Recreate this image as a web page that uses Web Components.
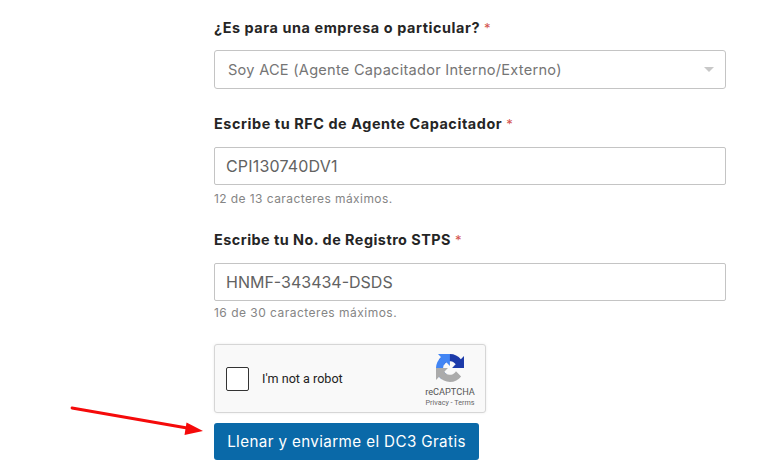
<!DOCTYPE html>
<html lang="es"><head><meta charset="utf-8"><title>Formulario</title>
<style>
html,body{margin:0;padding:0;background:#fff;height:470px;overflow:hidden}
body{font-family:Inter,"Open Sans",sans-serif}
</style></head><body>
<dc3-form>
  <form-field label="¿Es para una empresa o particular?" style="--after:25px;--gap:12px">
    <select-box>Soy ACE (Agente Capacitador Interno/Externo)</select-box>
  </form-field>
  <form-field label="Escribe tu RFC de Agente Capacitador" hint="12 de 13 caracteres máximos." style="--after:23px;--gap:13px;--hg:6px;--bl:.18px">
    <text-box>CPI130740DV1</text-box>
  </form-field>
  <form-field label="Escribe tu No. de Registro STPS" hint="16 de 30 caracteres máximos." style="--after:23px;--gap:13px;--hg:4px;--ls:.48px;--bl:0px;--hl:.48px">
    <text-box>HNMF-343434-DSDS</text-box>
  </form-field>
  <recaptcha-box></recaptcha-box>
  <submit-button>Llenar y enviarme el DC3 Gratis</submit-button>
</dc3-form>
<script>
function def(name,html){customElements.define(name,class extends HTMLElement{
  connectedCallback(){ if(this.shadowRoot)return; const r=this.attachShadow({mode:'open'}); r.innerHTML=typeof html==='function'?html(this):html; }
});}
def('dc3-form',`<style>
:host{display:flex;flex-direction:column;width:512px;margin-left:214px;padding-top:18px;position:relative;height:452px;box-sizing:content-box}
svg{position:absolute;left:-214px;top:0;pointer-events:none}
</style><slot></slot>
<svg width="214" height="470" viewBox="0 0 214 470" aria-hidden="true">
<line x1="72" y1="408" x2="190" y2="428.500" stroke="#f50a0a" stroke-width="2.800" stroke-linecap="round"/>
<polygon points="186.500,422.500 203,431 184.500,435" fill="#f50a0a"/>
</svg>`);
def('form-field',h=>`<style>
:host{display:flex;flex-direction:column;margin-bottom:var(--after,30px)}
.l{font:700 14.400px/20px Inter,sans-serif;color:#252525;margin-bottom:var(--gap,12px);letter-spacing:var(--ls,.58px);white-space:nowrap}
.l i{font-style:normal;font-weight:400;font-size:13px;color:#d4524e;letter-spacing:0}
.h{font:400 12px/16px Inter,sans-serif;color:#858585;margin-top:var(--hg,5px);letter-spacing:var(--hl,.42px)}
</style><div class="l">${h.getAttribute('label')} <i>*</i></div><slot></slot>${h.getAttribute('hint')?`<div class="h">${h.getAttribute('hint')}</div>`:''}`);
def('select-box',`<style>
:host{display:flex;align-items:center;justify-content:space-between;height:39px;box-sizing:border-box;border:1px solid #c4c4c4;border-radius:3px;padding:0 11px 0 13px;font:400 14.600px Inter,sans-serif;color:#757575;background:#fff;letter-spacing:.25px}
b{width:0;height:0;border-left:5px solid transparent;border-right:5px solid transparent;border-top:5px solid #c8c8c8}
</style><span><slot></slot></span><b></b>`);
def('text-box',`<style>
:host{display:flex;align-items:center;height:38px;box-sizing:border-box;border:1px solid #c4c4c4;border-radius:2px;padding:0 11px;font:400 16px Inter,sans-serif;color:#626262;background:#fff;letter-spacing:var(--bl,.1px)}
</style><slot></slot>`);
def('recaptcha-box',`<style>
:host{display:flex;align-items:center;width:272px;height:69px;box-sizing:border-box;border:1px solid #d6d6d6;border-radius:3px;background:#f9f9f9;box-shadow:0 0 3px rgba(0,0,0,.08);margin-bottom:10px;padding-left:11px;font-family:Roboto,sans-serif}
.c{width:23px;height:24px;box-sizing:border-box;border:1px solid #333;border-radius:2px;background:#fff;flex:none}
.t{font-size:12.600px;color:#222;margin-left:13px;flex:1}
.r{display:flex;flex-direction:column;align-items:center;width:56px;margin-right:7px;margin-top:4px}
.r svg{display:block}
.n{font-size:9.200px;line-height:11px;color:#555;margin-top:4px}
.p{font-size:7.200px;line-height:10px;color:#666;white-space:nowrap;margin-top:1px}
</style><div class="c"></div><div class="t">I'm not a robot</div>
<div class="r"><svg width="28" height="28" viewBox="0 0 64 64" aria-hidden="true">
<path d="M64 31.955l-.033-1.37V4.687l-7.16 7.16C50.948 4.674 42.033.093 32.05.093c-10.4 0-19.622 4.96-25.458 12.64l11.736 11.86a15.55 15.55 0 0 1 4.754-5.334c2.05-1.6 4.952-2.906 8.968-2.906.485 0 .86.057 1.135.163 4.976.393 9.288 3.14 11.828 7.124l-8.307 8.307c10.522-.04 22.4-.066 27.295.006" fill="#1c3aa9"/>
<path d="M31.862.094l-1.37.033H4.594l7.16 7.16C4.58 13.147 0 22.06 0 32.045c0 10.4 4.96 19.622 12.64 25.458l11.86-11.736a15.55 15.55 0 0 1-5.334-4.754c-1.6-2.05-2.906-4.952-2.906-8.968 0-.485.057-.86.163-1.135.393-4.976 3.14-9.288 7.124-11.828l8.307 8.307c-.04-10.522-.066-22.4.006-27.295" fill="#4285f4"/>
<path d="M.001 32.045l.033 1.37v25.898l7.16-7.16c5.86 7.173 14.774 11.754 24.76 11.754 10.4 0 19.622-4.96 25.458-12.64l-11.736-11.86a15.55 15.55 0 0 1-4.754 5.334c-2.05 1.6-4.952 2.906-8.968 2.906-.485 0-.86-.057-1.135-.163-4.976-.393-9.288-3.14-11.828-7.124l8.307-8.307c-10.522.04-22.4.066-27.295-.006" fill="#ababab"/>
</svg><div class="n">reCAPTCHA</div><div class="p">Privacy - Terms</div></div>`);
def('submit-button',`<style>
:host{display:inline-flex;align-self:flex-start;align-items:center;justify-content:center;width:265px;height:37px;border-radius:3px;background:#0a69a8;color:#fff;font:400 15.200px Inter,sans-serif;letter-spacing:.38px;white-space:nowrap}
</style><slot></slot>`);
</script>
</body></html>
